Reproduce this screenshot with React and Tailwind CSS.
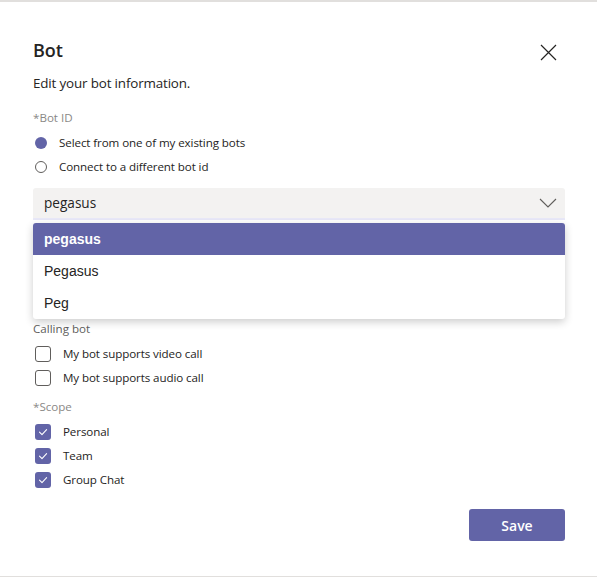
import React from "react";

const font = { fontFamily: "'Open Sans', 'Noto Sans', sans-serif" };

function Radio({ checked, label }) {
  return (
    <div className="flex items-center h-6 ml-[2px] gap-3">
      {checked ? (
        <span className="w-3 h-3 rounded-full bg-[#6264a7]" />
      ) : (
        <span className="w-3 h-3 rounded-full border border-[#605e5c] bg-white" />
      )}
      <span className="text-[11.6px] tracking-[-0.1px] text-[#252423]">{label}</span>
    </div>
  );
}

function Check({ checked, label }) {
  return (
    <div className="flex items-center h-6 ml-[2px] gap-3">
      {checked ? (
        <span className="w-4 h-4 rounded-[3px] bg-[#6264a7] flex items-center justify-center">
          <svg width="12" height="12" viewBox="0 0 12 12" fill="none">
            <path d="M2.5 6.2 L5 8.6 L9.6 3.6" stroke="white" strokeWidth="1.1" strokeLinecap="round" strokeLinejoin="round" />
          </svg>
        </span>
      ) : (
        <span className="w-4 h-4 rounded-[3px] border border-[#605e5c] bg-white" />
      )}
      <span className="text-[11.6px] tracking-[-0.1px] text-[#252423]">{label}</span>
    </div>
  );
}

export default function App() {
  return (
    <div
      className="w-[597px] h-[577px] bg-white border-t-2 border-[#e1dfdd] border-b border-b-[#e1dfdd] overflow-hidden"
      style={font}
    >
      <div className="flex flex-col pl-[33px] pr-[32px] pt-[36px]">
        <div className="flex justify-between items-start h-6">
          <h1 className="text-[18px] leading-6 font-semibold text-[#252423]">Bot</h1>
          <button className="w-8 h-8 -mt-[2px] mr-[1px] flex items-center justify-center">
            <svg width="17" height="17" viewBox="0 0 17 17" fill="none">
              <path d="M1 1 L16 16 M16 1 L1 16" stroke="#252423" strokeWidth="1.2" />
            </svg>
          </button>
        </div>
        <p className="mt-[11px] text-[13.4px] tracking-[-0.15px] leading-5 text-[#252423]">Edit your bot information.</p>
        <p className="mt-[17px] text-[11.6px] leading-4 text-[#8a8886]">*Bot ID</p>
        <div className="mt-[5px] flex flex-col">
          <Radio checked label="Select from one of my existing bots" />
          <Radio label="Connect to a different bot id" />
        </div>
        <div className="relative mt-[9px]">
          <div className="h-8 bg-[#f3f2f1] rounded-t-[3px] border-b-2 border-[#e8e8f8] flex items-center justify-between pl-[11px] pr-[8px]">
            <span className="text-[13.6px] text-[#252423]">pegasus</span>
            <svg width="18" height="10" viewBox="0 0 18 10" fill="none">
              <path d="M1 1 L9 9 L17 1" stroke="#605e5c" strokeWidth="1.1" />
            </svg>
          </div>
          <div
            className="absolute left-0 right-0 top-[35px] bg-white rounded-[3px] shadow-[0_3px_8px_rgba(0,0,0,0.2)] overflow-hidden z-10"
            style={{ fontFamily: "'Liberation Sans', Arial, sans-serif" }}
          >
            <div className="h-8 bg-[#6264a7] flex items-center pl-[11px] text-[14px] font-bold text-white">pegasus</div>
            <div className="h-8 flex items-center pl-[11px] text-[14px] text-[#252423]">Pegasus</div>
            <div className="h-8 flex items-center pl-[11px] text-[14px] text-[#252423]">Peg</div>
          </div>
        </div>
        <p className="mt-[101px] text-[11.6px] leading-4 text-[#605e5c]">Calling bot</p>
        <div className="mt-[5px] flex flex-col">
          <Check label="My bot supports video call" />
          <Check label="My bot supports audio call" />
        </div>
        <p className="mt-[9px] text-[11.6px] leading-4 text-[#8a8886]">*Scope</p>
        <div className="mt-[5px] flex flex-col">
          <Check checked label="Personal" />
          <Check checked label="Team" />
          <Check checked label="Group Chat" />
        </div>
        <button className="self-end mt-[17px] w-24 h-8 rounded-[3px] bg-[#6264a7] text-white text-[14px] font-semibold">
          Save
        </button>
      </div>
    </div>
  );
}
